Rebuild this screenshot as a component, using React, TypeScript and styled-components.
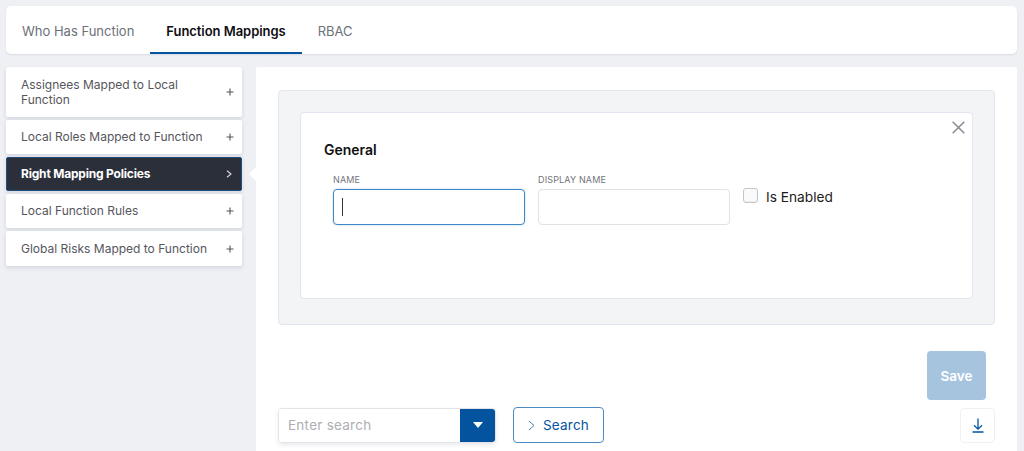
import React from 'react'
import styled, { createGlobalStyle } from 'styled-components'

const GlobalStyle = createGlobalStyle`
    html, body {
        margin: 0;
        padding: 0;
        height: 100%;
        overflow: hidden;
        background-color: #eef0f4;
        font-family: 'Inter', 'Liberation Sans', sans-serif;
    }
    * {
        box-sizing: border-box;
    }
`

const Page = styled.div`
    width: 1024px;
    height: 451px;
    overflow: hidden;
    padding: 6px 7px 0 6px;
    display: flex;
    flex-direction: column;
    gap: 13px;
`

const TabBar = styled.div`
    height: 48px;
    flex-shrink: 0;
    background-color: #fff;
    border-radius: 5px;
    box-shadow: 0 1px 2px rgba(40, 50, 80, 0.1);
    display: flex;
    overflow: hidden;
`

const Tab = styled.div<{ $active?: boolean }>`
    height: 48px;
    padding: 3px 16px 0;
    display: flex;
    align-items: center;
    font-size: 13px;
    font-weight: ${({ $active }) => ($active ? 600 : 400)};
    letter-spacing: ${({ $active }) => ($active ? '-0.05px' : '0')};
    color: ${({ $active }) => ($active ? '#0e0e12' : '#6b7079')};
    border-bottom: 2px solid ${({ $active }) => ($active ? '#03539f' : 'transparent')};
`

const Body = styled.div`
    flex: 1;
    display: flex;
    gap: 14px;
    min-height: 0;
`

const Sidebar = styled.div`
    width: 236px;
    flex-shrink: 0;
    display: flex;
    flex-direction: column;
    gap: 3px;
`

const SideItem = styled.div<{ $active?: boolean; $height: number }>`
    position: relative;
    height: ${({ $height }) => $height}px;
    padding: 0 8px 1px ${({ $active }) => ($active ? 14 : 15)}px;
    border-radius: 2px;
    display: flex;
    align-items: center;
    justify-content: space-between;
    font-size: 12px;
    line-height: 15px;
    font-weight: ${({ $active }) => ($active ? 700 : 400)};
    letter-spacing: ${({ $active }) => ($active ? '-0.2px' : '0')};
    color: ${({ $active }) => ($active ? '#fff' : '#56565c')};
    background-color: ${({ $active }) => ($active ? '#2b2f3a' : '#fff')};
    border: ${({ $active }) => ($active ? '1px solid #1f4f80' : 'none')};
    box-shadow: 0 2px 4px rgba(40, 50, 80, 0.13);

    ${({ $active }) =>
        $active &&
        `
        &::after {
            content: '';
            position: absolute;
            top: 9px;
            right: -15px;
            border-style: solid;
            border-width: 7px 7px 7px 7px;
            border-color: transparent #fff transparent transparent;
        }
    `}
`

const SideLabel = styled.span`
    max-width: 192px;
`

const SideIcon = styled.svg`
    width: 8px;
    height: 8px;
    flex-shrink: 0;
    margin-top: 1px;
`

const Main = styled.div`
    flex: 1;
    background-color: #fff;
    padding: 23px 22px 0;
    display: flex;
    flex-direction: column;
    border-radius: 2px 2px 0 0;
`

const OuterPanel = styled.div`
    height: 235px;
    flex-shrink: 0;
    padding: 21px 21px 25px;
    background-color: #f3f4f6;
    border: 1px solid #e3e6f0;
    border-radius: 4px;
`

const InnerPanel = styled.div`
    position: relative;
    height: 100%;
    background-color: #fff;
    border: 1px solid #e3e6f0;
    border-radius: 4px;
    padding: 28px 23px 0;
`

const CloseButton = styled.svg`
    position: absolute;
    top: 8px;
    right: 7px;
    width: 13px;
    height: 13px;
`

const SectionTitle = styled.div`
    font-size: 14px;
    line-height: 17px;
    font-weight: 600;
    color: #111;
`

const FormRow = styled.div`
    display: flex;
    align-items: flex-start;
    gap: 13px;
    margin: 16px 0 0 9px;
`

const Field = styled.div`
    width: 192px;
    display: flex;
    flex-direction: column;
    gap: 3px;
`

const FieldLabel = styled.label`
    font-size: 9px;
    line-height: 12px;
    letter-spacing: 0.15px;
    color: #72757c;
`

const InputBox = styled.div<{ $focused?: boolean }>`
    height: 36px;
    border-radius: 4px;
    border: 1px solid ${({ $focused }) => ($focused ? '#3f86c6' : '#e2e2e4')};
    box-shadow: ${({ $focused }) => ($focused ? '0 0 2px rgba(63, 134, 198, 0.45)' : 'none')};
    display: flex;
    align-items: center;
    padding-left: 8px;
`

const Caret = styled.div`
    width: 1px;
    height: 18px;
    background-color: #333;
`

const CheckRow = styled.div`
    display: flex;
    align-items: flex-start;
    gap: 8px;
    margin-top: 14px;
`

const CheckBox = styled.div`
    width: 15px;
    height: 15px;
    border: 1px solid #c4c5c9;
    border-radius: 3px;
    background-color: #fafafa;
    box-shadow: inset 0 -1px 1px rgba(0, 0, 0, 0.06);
`

const CheckLabel = styled.span`
    font-size: 13.7px;
    line-height: 17px;
    color: #1c1c20;
    margin-top: 1px;
`

const SaveRow = styled.div`
    display: flex;
    justify-content: flex-end;
    margin: 26px 9px 0 0;
`

const SaveButton = styled.div`
    width: 59px;
    height: 49px;
    border-radius: 4px;
    background-color: #a7c4df;
    color: #fff;
    font-size: 13.5px;
    font-weight: 600;
    display: flex;
    align-items: center;
    justify-content: center;
`

const SearchRow = styled.div`
    display: flex;
    align-items: center;
    margin-top: 7px;
`

const SearchBox = styled.div`
    width: 218px;
    height: 35px;
    display: flex;
    border-radius: 4px;
    border: 1px solid #e2e4ea;
    box-shadow: 0 2px 4px rgba(40, 50, 80, 0.1);
    overflow: hidden;
`

const SearchText = styled.div`
    flex: 1;
    padding-left: 9px;
    display: flex;
    align-items: center;
    font-size: 13.5px;
    letter-spacing: 0.25px;
    color: #adaeb2;
    background-color: #fff;
`

const DropButton = styled.div`
    width: 35px;
    background-color: #03539f;
    display: flex;
    align-items: center;
    justify-content: center;

    &::before {
        content: '';
        border-style: solid;
        border-width: 6px 5px 0 5px;
        border-color: #fff transparent transparent transparent;
    }
`

const SearchButton = styled.div`
    width: 91px;
    height: 36px;
    margin-left: 17px;
    border: 1px solid #4a8bc4;
    border-radius: 4px;
    display: flex;
    align-items: center;
    justify-content: center;
    gap: 8px;
    font-size: 13.5px;
    letter-spacing: 0.2px;
    color: #03539f;
    background-color: #fff;
`

const DownloadButton = styled.div`
    width: 35px;
    height: 35px;
    margin-left: auto;
    border: 1px solid #f0f0f2;
    border-radius: 4px;
    display: flex;
    align-items: center;
    justify-content: center;
`

const Plus = () => (
    <SideIcon viewBox="0 0 8 8">
        <path d="M4 0.5V7.5M0.5 4H7.5" stroke="#55555a" strokeWidth="1.1" fill="none" />
    </SideIcon>
)

const Chevron = () => (
    <SideIcon viewBox="0 0 8 8">
        <path d="M2 0.8L6 4L2 7.2" stroke="#d8d8dc" strokeWidth="1.1" fill="none" />
    </SideIcon>
)

const items = [
    { label: 'Assignees Mapped to Local Function', height: 50 },
    { label: 'Local Roles Mapped to Function', height: 34 },
    { label: 'Right Mapping Policies', height: 34, active: true },
    { label: 'Local Function Rules', height: 34 },
    { label: 'Global Risks Mapped to Function', height: 35 },
]

const App = () => {
    return (
        <Page>
            <GlobalStyle />
            <TabBar>
                <Tab>Who Has Function</Tab>
                <Tab $active>Function Mappings</Tab>
                <Tab>RBAC</Tab>
            </TabBar>
            <Body>
                <Sidebar>
                    {items.map((item) => (
                        <SideItem key={item.label} $active={item.active} $height={item.height}>
                            <SideLabel>{item.label}</SideLabel>
                            {item.active ? <Chevron /> : <Plus />}
                        </SideItem>
                    ))}
                </Sidebar>
                <Main>
                    <OuterPanel>
                        <InnerPanel>
                            <CloseButton viewBox="0 0 13 13">
                                <path d="M0.7 0.7L12.3 12.3M12.3 0.7L0.7 12.3" stroke="#8a8a8e" strokeWidth="1.5" fill="none" />
                            </CloseButton>
                            <SectionTitle>General</SectionTitle>
                            <FormRow>
                                <Field>
                                    <FieldLabel>NAME</FieldLabel>
                                    <InputBox $focused>
                                        <Caret />
                                    </InputBox>
                                </Field>
                                <Field>
                                    <FieldLabel>DISPLAY NAME</FieldLabel>
                                    <InputBox />
                                </Field>
                                <CheckRow>
                                    <CheckBox />
                                    <CheckLabel>Is Enabled</CheckLabel>
                                </CheckRow>
                            </FormRow>
                        </InnerPanel>
                    </OuterPanel>
                    <SaveRow>
                        <SaveButton>Save</SaveButton>
                    </SaveRow>
                    <SearchRow>
                        <SearchBox>
                            <SearchText>Enter search</SearchText>
                            <DropButton />
                        </SearchBox>
                        <SearchButton>
                            <svg width="7" height="11" viewBox="0 0 7 11">
                                <path d="M1 1L6 5.5L1 10" stroke="#4a7fb0" strokeWidth="1" fill="none" />
                            </svg>
                            Search
                        </SearchButton>
                        <DownloadButton>
                            <svg width="12" height="15" viewBox="0 0 12 15">
                                <path d="M6 0.5V11M2 7.3L6 11.2L10 7.3M0.5 14H11.5" stroke="#03539f" strokeWidth="1.3" fill="none" />
                            </svg>
                        </DownloadButton>
                    </SearchRow>
                </Main>
            </Body>
        </Page>
    )
}

export default App
